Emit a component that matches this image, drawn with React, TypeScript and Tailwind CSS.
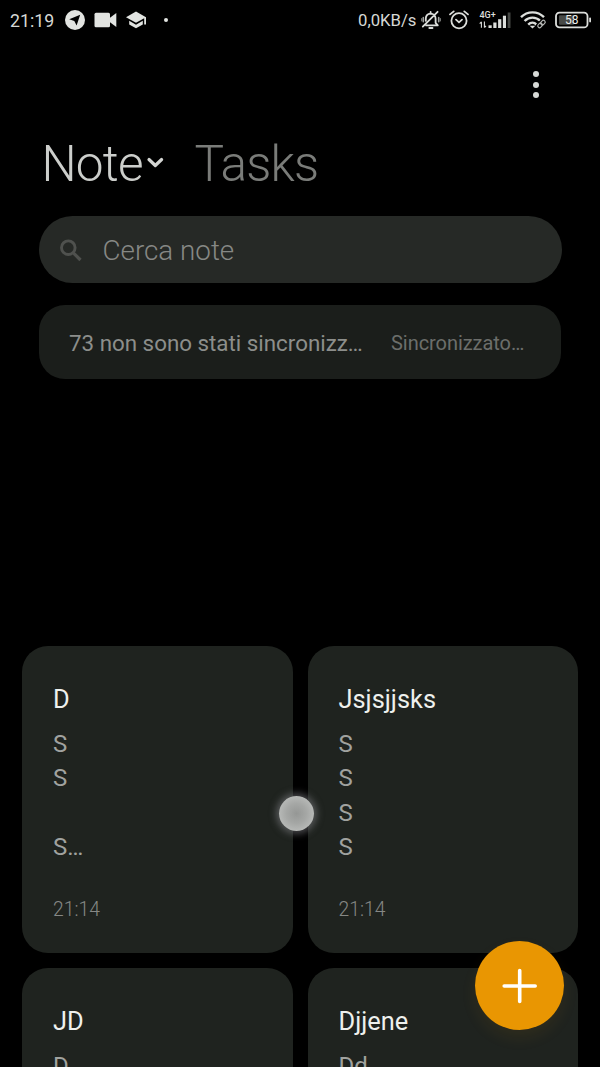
type Note = {
  title: string;
  lines: string[];
  time: string;
};

const notes: Note[] = [
  { title: 'D', lines: ['S', 'S', '', 'S…'], time: '21:14' },
  { title: 'Jsjsjjsks', lines: ['S', 'S', 'S', 'S'], time: '21:14' },
  { title: 'JD', lines: ['D'], time: '21:14' },
  { title: 'Djjene', lines: ['Dd'], time: '21:14' },
];

function StatusLeft() {
  return (
    <div className="flex items-center">
      <span className="w-[55px] pt-px text-[17.8px] leading-10">21:19</span>
      <svg className="h-5 w-5" viewBox="0 0 20 20">
        <circle cx="10" cy="10" r="10" fill="#e2e4e1" />
        <path d="M15.2 4.8 11.6 15.4 9.3 10.9 4.2 9.2Z" fill="#000" />
      </svg>
      <svg className="ml-[9px] h-4 w-[23px]" viewBox="0 0 23 16" fill="#e2e4e1">
        <rect x="0.5" y="0.8" width="15.5" height="14.4" rx="1.5" />
        <path d="M15 6.5 22.3 1v14L15 9.5Z" />
      </svg>
      <svg className="ml-[9px] h-[18px] w-5" viewBox="0 0 20 18" fill="#e2e4e1">
        <path d="M10 0.5 0 6.2l10 5.6 8.2-4.6v6.3H20V6.2Z" />
        <path d="M3.2 9.8v3.7L10 17.3l6.8-3.8V9.8L10 13.7Z" />
      </svg>
      <span className="ml-[18px] h-1 w-1 rounded-full bg-[#e2e4e1]" />
    </div>
  );
}

function StatusRight() {
  return (
    <div className="flex items-center">
      <span className="w-[63px] pt-px text-[16.7px] leading-10 whitespace-nowrap">0,0KB/s</span>
      <svg className="h-5 w-5" viewBox="0 0 20 20" fill="none" stroke="#dcdedb" strokeWidth="1.8" strokeLinecap="round" strokeLinejoin="round">
        <path d="M4.8 10.8V8.8C4.8 5.9 6.8 3.8 9.6 3.6c3 0 5 2.2 5 5.2v4l2.2 2.6H5.2M9.6 2v1.6M8.3 18h3.2M1.8 16.6 16.6 1.8" />
        <path d="M2.3 7.6v4.2M17.7 7.6v4.2" stroke="#a0a29f" strokeWidth="1.6" />
        <path d="M0.7 8.6v2.2M19.3 8.6v2.2" stroke="#80827f" strokeWidth="1.2" />
      </svg>
      <svg className="ml-2 h-5 w-5" viewBox="0 0 20 20" fill="none" stroke="#dcdedb" strokeWidth="1.8" strokeLinecap="round">
        <circle cx="10" cy="10.8" r="7.6" />
        <path d="M1 4.4 4.7 1.4M19 4.4l-3.7-3M7 9.6l3 2.7 3-2.7" />
      </svg>
      <svg className="ml-[10px] h-5 w-8" viewBox="0 0 32 20" fill="#dcdedb">
        <text x="0.5" y="7.5" fontFamily="Roboto, sans-serif" fontSize="9" fontWeight="500">4G+</text>
        <path d="M2.4 17.7v-6M0.7 13.6 2.4 11.9M5.4 11.5v6M7 15.8 5.4 17.5" stroke="#dcdedb" strokeWidth="1.1" />
        <rect x="9.5" y="15.3" width="3.2" height="2.7" />
        <rect x="14.3" y="12.5" width="3.2" height="5.5" />
        <rect x="19.1" y="9.2" width="3.2" height="8.8" />
        <rect x="23.9" y="5.7" width="3.1" height="12.3" />
        <rect x="28.7" y="2.5" width="2.8" height="15.5" fill="#444643" />
      </svg>
      <svg className="ml-[9px] h-5 w-[27px]" viewBox="0 0 27 20" fill="none" stroke="#dcdedb" strokeWidth="2.4">
        <path d="M1 7.2C7.5.8 17.5.8 24 7.2M4.6 11c4.6-4.5 11.2-4.5 15.8 0M8.2 14.6c2.5-2.4 5.9-2.4 8.4 0" />
        <path d="M9.6 15.8h5.8L12.5 18.6Z" fill="#dcdedb" stroke="none" />
        <g transform="rotate(-45 21.5 14)" stroke="#000" strokeWidth="4">
          <rect x="17.2" y="12.4" width="8.6" height="3.6" rx="1.8" />
        </g>
        <g transform="rotate(-45 21.5 14)" stroke="#b5b7b4" strokeWidth="1.2">
          <rect x="17" y="12.2" width="5" height="3.6" rx="1.8" />
          <rect x="21" y="12.2" width="5" height="3.6" rx="1.8" />
        </g>
      </svg>
      <svg className="ml-[8px] h-5 w-[37px]" viewBox="0 0 37 20">
        <rect x="1" y="2.6" width="31.5" height="14.8" rx="3.5" fill="none" stroke="#dcdedb" strokeWidth="1.8" />
        <rect x="4" y="5.3" width="15" height="9.4" rx="1" fill="#484a47" />
        <rect x="34.2" y="7.6" width="1.8" height="4.8" rx="0.8" fill="#dcdedb" />
        <text x="16.7" y="14.3" textAnchor="middle" fontFamily="Roboto, sans-serif" fontSize="12" fill="#eceeeb">58</text>
      </svg>
    </div>
  );
}

function NoteCard({ note }: { note: Note }) {
  return (
    <div className="h-[307px] rounded-[26px] bg-[#1f231f] pt-[35px] pl-[31px]">
      <h2 className="text-[25.4px] leading-[36px] text-[#eef0ed]">{note.title}</h2>
      <div className="mt-[9.5px] h-[138px] text-[24px] text-[#a0a29f]">
        {note.lines.map((line, i) => (
          <p key={i} className="h-[34.5px] leading-[34.5px]">{line}</p>
        ))}
      </div>
      <p className="mt-[33.5px] text-[19.3px] leading-[24px] font-light text-[#868885]">{note.time}</p>
    </div>
  );
}

function App() {
  return (
    <div className="relative h-[1067px] w-[600px] overflow-hidden bg-black font-['Roboto',sans-serif]">
      <div className="flex h-10 items-center justify-between pr-2 pl-[10px] text-[#d6d8d5]">
        <StatusLeft />
        <StatusRight />
      </div>

      <div className="flex h-[90px] justify-end pt-[31px] pr-[61px]">
        <button className="flex h-[27px] w-[7px] flex-col items-center justify-between">
          <span className="h-1.5 w-1.5 rounded-full bg-[#d8dad7]" />
          <span className="h-1.5 w-1.5 rounded-full bg-[#d8dad7]" />
          <span className="h-1.5 w-1.5 rounded-full bg-[#d8dad7]" />
        </button>
      </div>

      <div className="flex h-[86px] items-start pl-[41.5px] text-[49.5px] leading-[69px] font-light tracking-[-0.8px]">
        <h1 className="w-[103.5px] text-[#cccecb]">Note</h1>
        <svg className="mt-[26px] h-3 w-5" viewBox="0 0 20 12" fill="none" stroke="#d4d6d3" strokeWidth="3.2" strokeLinecap="round" strokeLinejoin="round">
          <path d="M4 3.5l6.3 6L16.6 3.5" />
        </svg>
        <span className="ml-[29.5px] text-[#7a7c79]">Tasks</span>
      </div>

      <div className="mx-auto flex h-[67px] w-[523px] items-center rounded-full bg-[#262926] pl-[20px]">
        <svg className="h-6 w-6" viewBox="0 0 24 24" fill="none" stroke="#4f514e" strokeWidth="2.9">
          <circle cx="9.3" cy="9.7" r="6.8" />
          <path d="M14.3 14.8 21.5 22" strokeWidth="3.2" />
        </svg>
        <span className="ml-5 pt-[2px] text-[27.8px] leading-[65px] font-light text-[#868885]">Cerca note</span>
      </div>

      <div className="mx-auto mt-[22px] flex h-[74px] w-[522px] items-center rounded-[26px] bg-[#1b1e1b] pt-[3px] pl-[30px]">
        <span className="w-[322px] text-[22.35px] whitespace-nowrap text-[#8c8e8b]">73 non sono stati sincronizz…</span>
        <span className="pb-px text-[20px] tracking-[-0.05px] whitespace-nowrap text-[#6c6e6b]">Sincronizzato…</span>
      </div>

      <div className="mt-[267px] grid grid-cols-2 gap-[15px] px-[22px]">
        {notes.map((note) => (
          <NoteCard key={note.title} note={note} />
        ))}
      </div>

      {/* touch indicator */}
      <div className="absolute top-[796px] left-[278.5px] h-[35px] w-[35px] rounded-full bg-[radial-gradient(circle,#959795_0%,#a5a7a5_40%,#b9bbb9_75%,#bec0be_100%)] shadow-[0_0_7px_3px_rgba(130,130,135,0.55)]" />

      <button className="absolute top-[941px] left-[475px] flex h-[89px] w-[89px] items-center justify-center rounded-full bg-[#e99602] shadow-[0_8px_16px_rgba(233,150,2,0.08)]">
        <svg className="h-9 w-9" viewBox="0 0 36 36" stroke="#fff" strokeWidth="3.6" strokeLinecap="round">
          <path d="M17.7 2.5v31M2.2 18h31" />
        </svg>
      </button>
    </div>
  );
}

export default App;
